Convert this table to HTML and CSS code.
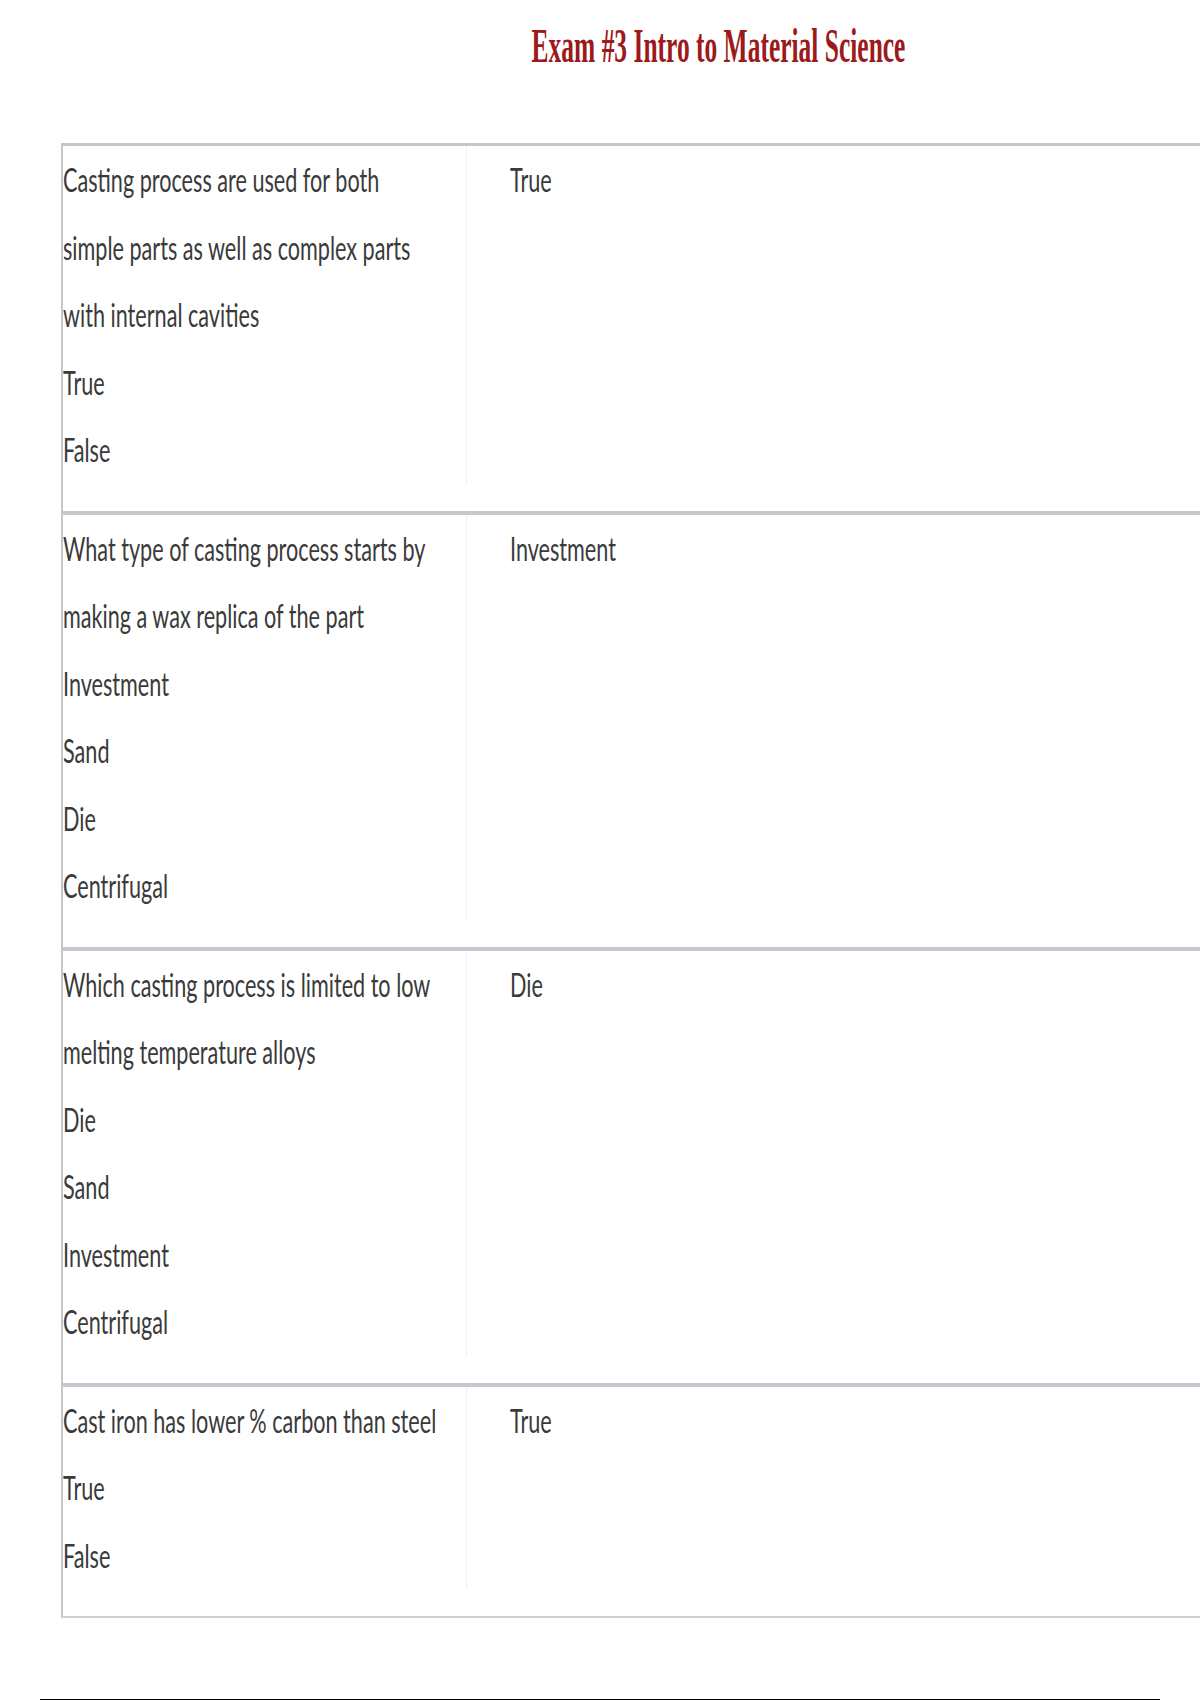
FILE: index.html
```html
<!DOCTYPE html>
<html lang="en">
<head>
<meta charset="utf-8">
<title>Exam #3 Intro to Material Science</title>
<link rel="stylesheet" href="styles.css">
</head>
<body>
<header class="page-header">
  <h1 class="title"><span class="title-text">Exam #3 Intro to Material Science</span></h1>
</header>
<main class="qa-table">
  <section class="qa-row">
    <div class="q-cell">
      <div class="q-lines">
        <p class="line"><span class="sq">Casting process are used for both</span></p>
        <p class="line"><span class="sq">simple parts as well as complex parts</span></p>
        <p class="line"><span class="sq">with internal cavities</span></p>
        <p class="line"><span class="sq">True</span></p>
        <p class="line"><span class="sq">False</span></p>
      </div>
    </div>
    <div class="a-cell"><p class="line"><span class="sq">True</span></p></div>
  </section>
  <section class="qa-row">
    <div class="q-cell">
      <div class="q-lines">
        <p class="line"><span class="sq">What type of casting process starts by</span></p>
        <p class="line"><span class="sq">making a wax replica of the part</span></p>
        <p class="line"><span class="sq">Investment</span></p>
        <p class="line"><span class="sq">Sand</span></p>
        <p class="line"><span class="sq">Die</span></p>
        <p class="line"><span class="sq">Centrifugal</span></p>
      </div>
    </div>
    <div class="a-cell"><p class="line"><span class="sq">Investment</span></p></div>
  </section>
  <section class="qa-row">
    <div class="q-cell">
      <div class="q-lines">
        <p class="line"><span class="sq">Which casting process is limited to low</span></p>
        <p class="line"><span class="sq">melting temperature alloys</span></p>
        <p class="line"><span class="sq">Die</span></p>
        <p class="line"><span class="sq">Sand</span></p>
        <p class="line"><span class="sq">Investment</span></p>
        <p class="line"><span class="sq">Centrifugal</span></p>
      </div>
    </div>
    <div class="a-cell"><p class="line"><span class="sq">Die</span></p></div>
  </section>
  <section class="qa-row last">
    <div class="q-cell">
      <div class="q-lines">
        <p class="line"><span class="sq">Cast iron has lower % carbon than steel</span></p>
        <p class="line"><span class="sq">True</span></p>
        <p class="line"><span class="sq">False</span></p>
      </div>
    </div>
    <div class="a-cell"><p class="line"><span class="sq">True</span></p></div>
  </section>
</main>
<footer class="page-footer"></footer>
</body>
</html>
```
FILE: styles.css
```css
html, body {
  margin: 0;
  padding: 0;
  background: #ffffff;
}
body {
  overflow: hidden;
  font-family: Lato, "Open Sans", "Liberation Sans", sans-serif;
  color: #3a3a3a;
}
.page-header {
  padding-top: 16px;
  padding-left: 236px;
  text-align: center;
}
.title {
  margin: 0;
  height: 60px;
  line-height: 60px;
  font-family: "Liberation Serif", "Times New Roman", serif;
  font-weight: bold;
  font-size: 49px;
  color: #9c1a1c;
  white-space: nowrap;
}
.title-text {
  display: inline-block;
  transform: scaleX(0.52);
  transform-origin: 50% 50%;
}
.qa-table {
  margin: 67px 0 0 61px;
  border-top: 3px solid #c6c7cb;
  border-left: 2px solid #c6c6c6;
  border-bottom: 2px solid #d0d0d0;
}
.qa-row {
  display: grid;
  grid-template-columns: 404px 1fr;
  border-bottom: 4px solid #c4c7ce;
}
.qa-row.last {
  border-bottom: none;
}
.q-cell {
  padding-bottom: 27px;
}
.q-lines {
  border-right: 1px solid #f0f0f0;
}
.a-cell {
  padding-left: 43px;
}
.line {
  margin: 0;
  height: 67.5px;
  line-height: 67.5px;
  font-size: 33px;
  white-space: nowrap;
}
.sq {
  display: inline-block;
  transform: scaleX(0.655);
  transform-origin: 0 50%;
}
.page-footer {
  margin: 81px 0 0 40px;
  width: 1120px;
  height: 4px;
  background: #000000;
}
```
